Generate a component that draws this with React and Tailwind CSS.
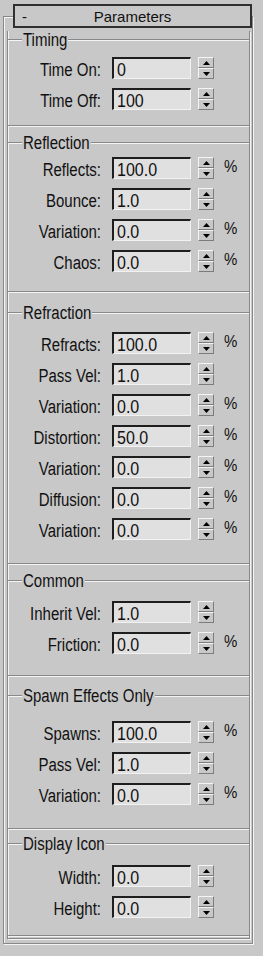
import React from 'react';

const groups = [
  { title: 'Timing', mt: '-mt-[8px]', pt: 'pt-[9px]', pb: 'pb-[15px]', rows: [['Time On:', '0', false], ['Time Off:', '100', false]] },
  { title: 'Reflection', mt: 'mt-[8px]', pt: 'pt-[6px]', pb: 'pb-[19px]', rows: [['Reflects:', '100.0', true], ['Bounce:', '1.0', false], ['Variation:', '0.0', true], ['Chaos:', '0.0', true]] },
  { title: 'Refraction', mt: 'mt-[12px]', pt: 'pt-[11px]', pb: 'pb-[23px]', rows: [['Refracts:', '100.0', true], ['Pass Vel:', '1.0', false], ['Variation:', '0.0', true], ['Distortion:', '50.0', true], ['Variation:', '0.0', true], ['Diffusion:', '0.0', true], ['Variation:', '0.0', true]] },
  { title: 'Common', mt: 'mt-[8px]', pt: 'pt-[12px]', pb: 'pb-[21px]', rows: [['Inherit Vel:', '1.0', false], ['Friction:', '0.0', true]] },
  { title: 'Spawn Effects Only', mt: 'mt-[11px]', pt: 'pt-[17px]', pb: 'pb-[23px]', rows: [['Spawns:', '100.0', true], ['Pass Vel:', '1.0', false], ['Variation:', '0.0', true]] },
  { title: 'Display Icon', mt: 'mt-[6px]', pt: 'pt-[13px]', pb: 'pb-[17px]', rows: [['Width:', '0.0', false], ['Height:', '0.0', false]] },
];

function Line({ className = '' }) {
  return <div className={'h-px bg-[#888888] shadow-[0_1px_0_#f4f4f4] ' + className} />;
}

function Spinner() {
  return (
    <div className="flex h-[22px] w-[16px] flex-col">
      <div className="flex h-[11px] items-center justify-center border-t border-l border-t-[#f4f4f4] border-l-[#f4f4f4] border-b border-r border-b-[#7c7c7c] border-r-[#7c7c7c]">
        <svg width="7" height="4" viewBox="0 0 7 4"><path d="M3.5 0L7 4H0z" fill="#000" /></svg>
      </div>
      <div className="flex h-[11px] items-center justify-center border-t border-l border-t-[#f4f4f4] border-l-[#f4f4f4] border-b border-r border-b-[#7c7c7c] border-r-[#7c7c7c]">
        <svg width="7" height="4" viewBox="0 0 7 4"><path d="M0 0H7L3.5 4z" fill="#000" /></svg>
      </div>
    </div>
  );
}

function Row({ label, value, pct }) {
  return (
    <div className="flex h-[22px] items-center">
      <div className="w-[93px] pt-[3px] text-right leading-[17px]">
        <span className="inline-block scale-y-[1.2]">{label}</span>
      </div>
      <div className="ml-[11px] flex h-[22px] w-[79px] items-center border-t-2 border-l-2 border-t-[#1e1e1e] border-l-[#1e1e1e] border-b border-r border-b-[#f2f2f2] border-r-[#f2f2f2] bg-[#e0e0e0] pl-[3px] pt-[2px] text-[16px] leading-[17px]">
        <span className="inline-block scale-y-[1.2]">{value}</span>
      </div>
      <div className="ml-[7px]">
        <Spinner />
      </div>
      {pct && (
        <div className="mb-[5px] ml-[10px] leading-[17px]">
          <span className="inline-block scale-y-[1.1]">%</span>
        </div>
      )}
    </div>
  );
}

function Group({ g }) {
  return (
    <div className={g.mt}>
      <div className="flex h-[17px] items-center">
        <Line className="w-[14px]" />
        <span className="inline-block scale-y-[1.2] px-px leading-[17px]">{g.title}</span>
        <Line className="flex-1" />
      </div>
      <div className={'flex flex-col gap-[9px] ' + g.pt + ' ' + g.pb}>
        {g.rows.map((r, i) => (
          <Row key={i} label={r[0]} value={r[1]} pct={r[2]} />
        ))}
      </div>
      <Line />
    </div>
  );
}

export default function App() {
  return (
    <div className="flex h-[956px] w-[263px] flex-col bg-[#c8c8c8] font-['Liberation_Sans',Arial,sans-serif] text-[15px] text-[#111]">
      <div className="ml-[3px] mt-[16px] w-[250px] border border-[#888888] pb-[4px] pl-[3px] pr-[2px] shadow-[inset_1px_1px_0_#f4f4f4,1px_1px_0_#f4f4f4]">
        <div className="-mt-[13px] ml-[6px] grid h-[24px] w-[239px] grid-cols-[20px_1fr_20px] items-center border-2 border-[#303030] bg-[#c8c8c8] leading-[17px]">
          <span className="pl-[7px]">-</span>
          <span className="text-center">Parameters</span>
          <span />
        </div>
        <div className="mt-[11px] border-x border-b border-[#888888] pb-[2px] shadow-[inset_1px_0_0_#f4f4f4,1px_1px_0_#f4f4f4]">
          {groups.map((g, i) => (
            <Group key={i} g={g} />
          ))}
        </div>
      </div>
    </div>
  );
}
